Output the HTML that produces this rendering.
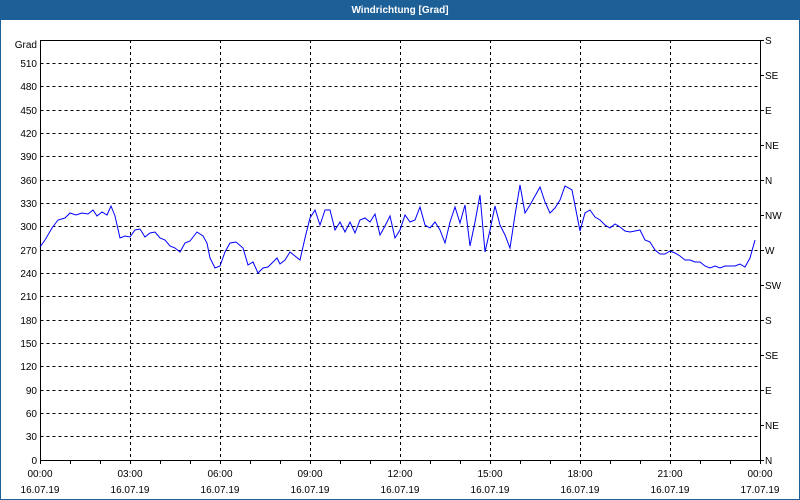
<!DOCTYPE html>
<html><head><style>
html,body{margin:0;padding:0;width:800px;height:500px;overflow:hidden;background:#fff;font-family:"Liberation Sans",sans-serif}
</style></head><body>
<svg width="800" height="500" xmlns="http://www.w3.org/2000/svg" font-family="Liberation Sans, sans-serif" font-size="10" shape-rendering="crispEdges">
<rect x="0" y="0" width="800" height="500" fill="#fff"/>
<rect x="0" y="0" width="800" height="20" fill="#1d5f97"/>
<rect x="0" y="20" width="1" height="480" fill="#1d5f97"/>
<rect x="799" y="20" width="1" height="480" fill="#1d5f97"/>
<rect x="0" y="499" width="800" height="1" fill="#1d5f97"/>
<text x="400" y="13" fill="#fff" font-weight="bold" font-size="10" text-anchor="middle">Windrichtung [Grad]</text>
<g stroke="#000" stroke-width="1" stroke-dasharray="3,3" fill="none">
<path d="M40.5 63.5H760M40.5 86.5H760M40.5 110.5H760M40.5 133.5H760M40.5 156.5H760M40.5 180.5H760M40.5 203.5H760M40.5 226.5H760M40.5 250.5H760M40.5 273.5H760M40.5 296.5H760M40.5 320.5H760M40.5 343.5H760M40.5 366.5H760M40.5 390.5H760M40.5 413.5H760M40.5 436.5H760"/>
<path d="M130.5 40V460M220.5 40V460M310.5 40V460M400.5 40V460M490.5 40V460M580.5 40V460M670.5 40V460"/>
</g>
<g stroke="#000" fill="none">
<rect x="40.5" y="40.5" width="720" height="420"/>
<path d="M760 40.5h4M760 75.5h4M760 110.5h4M760 145.5h4M760 180.5h4M760 215.5h4M760 250.5h4M760 285.5h4M760 320.5h4M760 355.5h4M760 390.5h4M760 425.5h4M760 460.5h4"/>
<path d="M40.5 460v4M70.5 460v4M100.5 460v4M130.5 460v4M160.5 460v4M190.5 460v4M220.5 460v4M250.5 460v4M280.5 460v4M310.5 460v4M340.5 460v4M370.5 460v4M400.5 460v4M430.5 460v4M460.5 460v4M490.5 460v4M520.5 460v4M550.5 460v4M580.5 460v4M610.5 460v4M640.5 460v4M670.5 460v4M700.5 460v4M730.5 460v4M760.5 460v4"/>
</g>
<g fill="#000" text-anchor="end">
<text x="37" y="48">Grad</text>
<text x="37" y="67">510</text><text x="37" y="90">480</text><text x="37" y="114">450</text><text x="37" y="137">420</text><text x="37" y="160">390</text><text x="37" y="184">360</text><text x="37" y="207">330</text><text x="37" y="230">300</text><text x="37" y="254">270</text><text x="37" y="277">240</text><text x="37" y="300">210</text><text x="37" y="324">180</text><text x="37" y="347">150</text><text x="37" y="370">120</text><text x="37" y="394">90</text><text x="37" y="417">60</text><text x="37" y="440">30</text><text x="37" y="464">0</text>
</g>
<g fill="#000">
<text x="765" y="44">S</text><text x="765" y="79">SE</text><text x="765" y="114">E</text><text x="765" y="149">NE</text><text x="765" y="184">N</text><text x="765" y="219">NW</text><text x="765" y="254">W</text><text x="765" y="289">SW</text><text x="765" y="324">S</text><text x="765" y="359">SE</text><text x="765" y="394">E</text><text x="765" y="429">NE</text><text x="765" y="464">N</text>
</g>
<g fill="#000" text-anchor="middle">
<text x="40" y="477">00:00</text><text x="40" y="493">16.07.19</text>
<text x="130" y="477">03:00</text><text x="130" y="493">16.07.19</text>
<text x="220" y="477">06:00</text><text x="220" y="493">16.07.19</text>
<text x="310" y="477">09:00</text><text x="310" y="493">16.07.19</text>
<text x="400" y="477">12:00</text><text x="400" y="493">16.07.19</text>
<text x="490" y="477">15:00</text><text x="490" y="493">16.07.19</text>
<text x="580" y="477">18:00</text><text x="580" y="493">16.07.19</text>
<text x="670" y="477">21:00</text><text x="670" y="493">16.07.19</text>
<text x="760" y="477">00:00</text><text x="760" y="493">17.07.19</text>
</g>
<polyline fill="none" stroke="#0000ff" stroke-width="1" shape-rendering="auto" points="40,247 45,240 52,228 58,220 65,218 70,213 76,215 82,213 88,214 93,210 97,216 102,212 107,215 111,206 115,216 120,238 125,236 130,237 135,230 140,229 145,237 150,233 155,232 160,238 165,240 170,246 175,248 180,252 185,243 190,241 197,232 203,236 207,243 210,258 215,268 220,266 225,252 230,243 236,242 243,248 248,265 253,262 258,273 263,268 268,267 272,263 277,258 280,264 285,260 290,252 295,256 300,260 305,238 310,218 315,210 320,225 325,210 330,210 335,230 340,222 345,232 350,222 355,233 360,220 365,218 370,222 375,214 380,235 385,226 390,216 395,238 400,230 405,215 410,222 415,220 420,207 425,225 430,228 435,222 440,230 445,243 450,222 455,207 460,223 465,205 470,246 475,222 480,195 485,252 490,230 495,206 500,225 505,235 510,248 515,215 520,185 525,213 530,205 535,196 540,187 545,202 550,213 555,208 560,200 565,186 572,190 580,231 585,213 590,210 595,217 600,220 605,225 610,228 615,224 620,227 625,231 630,232 635,231 640,230 645,240 650,242 655,250 660,254 665,254 670,251 675,253 680,256 685,260 690,260 695,262 700,262 705,266 710,268 715,266 720,268 725,266 730,266 735,266 740,264 745,267 750,258 755,240"/>
</svg>
</body></html>
